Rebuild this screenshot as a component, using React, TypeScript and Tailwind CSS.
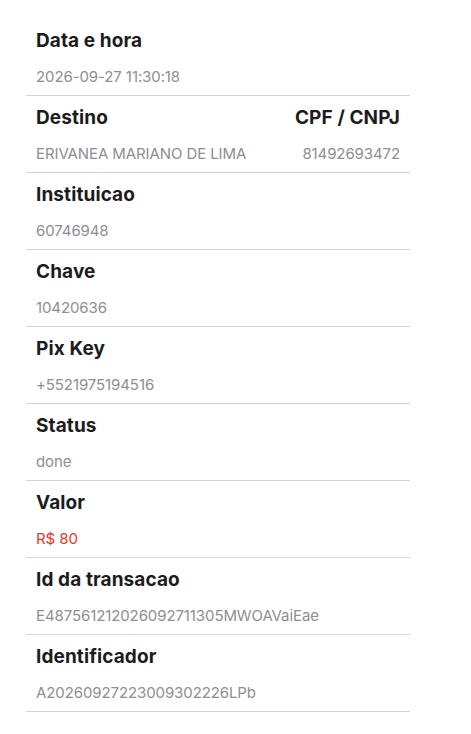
const rows: { label: string; value: string; right?: [string, string]; red?: boolean }[] = [
  { label: "Data e hora", value: "2026-09-27 11:30:18" },
  { label: "Destino", value: "ERIVANEA MARIANO DE LIMA", right: ["CPF / CNPJ", "81492693472"] },
  { label: "Instituicao", value: "60746948" },
  { label: "Chave", value: "10420636" },
  { label: "Pix Key", value: "+5521975194516" },
  { label: "Status", value: "done" },
  { label: "Valor", value: "R$ 80", red: true },
  { label: "Id da transacao", value: "E487561212026092711305MWOAVaiEae" },
  { label: "Identificador", value: "A20260927223009302226LPb" },
];

export default function App() {
  return (
    <div className="min-h-screen bg-white font-['Inter',sans-serif]">
      <div className="ml-[26px] w-[384px] pt-[19px]">
        {rows.map((r) => (
          <div key={r.label} className="flex justify-between border-b border-[#d4d4d8] px-[10px] pt-[10px] pb-[8px]">
            <div className="flex flex-col">
              <span className="text-[19px] leading-[24px] font-bold tracking-[0.1px] text-[#1c1c1e]">{r.label}</span>
              <span className={`mt-[13px] text-[15px] leading-[21px] tracking-[-0.1px] ${r.red ? "text-[#e0382c]" : "text-[#8e8e93]"}`}>
                {r.value}
              </span>
            </div>
            {r.right && (
              <div className="flex flex-col items-end">
                <span className="text-[19px] leading-[24px] font-bold tracking-[0.1px] text-[#1c1c1e]">{r.right[0]}</span>
                <span className="mt-[13px] text-[15px] leading-[21px] tracking-[-0.1px] text-[#8e8e93]">{r.right[1]}</span>
              </div>
            )}
          </div>
        ))}
      </div>
    </div>
  );
}
